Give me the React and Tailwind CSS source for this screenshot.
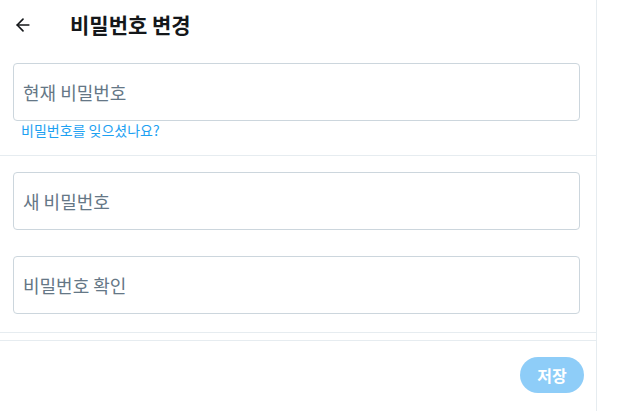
import { ArrowLeft } from "lucide-react";

const font = { fontFamily: '"Noto Sans CJK KR", "Noto Sans", sans-serif' };

const Field = ({ placeholder, className = "" }) => (
  <input
    type="password"
    placeholder={placeholder}
    className={`block ml-[13px] mr-[16px] w-[567px] h-[58px] rounded-[4px] border border-[#ccd6dd] bg-white px-[9px] text-[18px] text-[#14171a] placeholder:text-[#657786] outline-none ${className}`}
  />
);

const App = () => {
  return (
    <div className="w-[617px] h-[411px] bg-white overflow-hidden" style={font}>
      <div className="w-[597px] h-full border-r border-[#e6ecf0]">
        {/* Header */}
        <div className="h-[49px] flex items-center">
          <div className="w-[70px] pl-[13px] flex items-center">
            <ArrowLeft className="w-[20px] h-[20px] text-[#14171a]" strokeWidth={2} />
          </div>
          <h2 className="text-[21px] font-bold text-[#14171a] leading-none">비밀번호 변경</h2>
        </div>

        {/* Current password */}
        <div className="pt-[14px] pb-[17px] border-b border-[#e6ecf0]">
          <Field placeholder="현재 비밀번호" />
          <a href="#" className="block ml-[21px] mt-[1px] text-[14px] leading-[16px] text-[#1da1f2]">
            비밀번호를 잊으셨나요?
          </a>
        </div>

        {/* New password */}
        <div className="pt-[16px] pb-[18px] border-b border-[#e6ecf0]">
          <Field placeholder="새 비밀번호" />
          <Field placeholder="비밀번호 확인" className="mt-[26px]" />
        </div>

        <div className="h-[8px] border-b border-[#e6ecf0]" />

        {/* Save */}
        <div className="flex justify-end pt-[16px] pr-[12px]">
          <button
            disabled
            className="w-[64px] h-[36px] rounded-full bg-[#8ecdf8] text-white text-[16px] font-bold"
          >
            저장
          </button>
        </div>
      </div>
    </div>
  );
};

export default App;
